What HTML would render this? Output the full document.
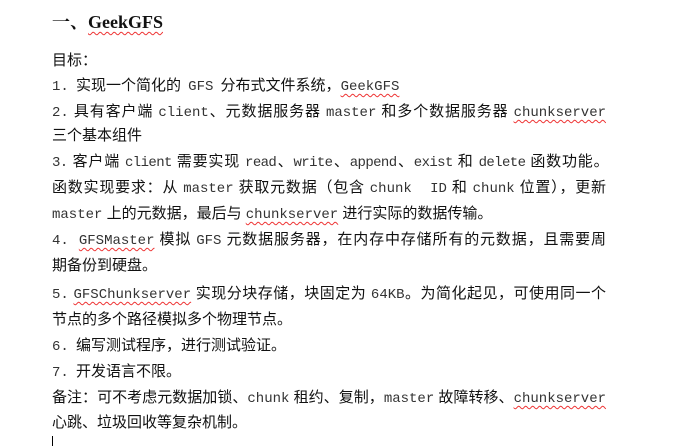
<!DOCTYPE html>
<html><head><meta charset="utf-8"><style>
body{margin:0;width:687px;height:447px;background:#fff;position:relative;overflow:hidden;font-family:"Liberation Sans","Noto Sans CJK SC",sans-serif;color:#111;}
.l{position:absolute;left:52px;width:554px;font-size:15px;line-height:20px;white-space:nowrap;}
.j{text-align:justify;text-align-last:justify;white-space:normal;}
.m{font-family:"Liberation Mono","Noto Sans CJK SC",monospace;color:#333;font-size:14px;}
.n{display:inline-block;width:24px;font-family:"Liberation Mono",monospace;color:#333;font-size:14px;}
.w{text-decoration:underline wavy #e33;text-decoration-thickness:1px;text-underline-offset:3px;}
.t{position:absolute;left:52px;top:9px;font-size:18px;font-weight:bold;line-height:26px;font-family:"Liberation Serif","Noto Serif CJK SC",serif;}
.cur{position:absolute;left:52px;top:436px;width:1px;height:10px;background:#000;}
</style></head><body>
<div class="t">一、<span class="w">GeekGFS</span></div>
<div class="l" style="top:51px">目标：</div>
<div class="l" style="top:76px;word-spacing:3px"><span class="n">1.</span>实现一个简化的 <span class="m">GFS</span> 分布式文件系统，<span class="m w">GeekGFS</span></div>
<div class="l j" style="top:102px"><span class="m">2.</span> 具有客户端 <span class="m">client</span>、元数据服务器 <span class="m">master</span> 和多个数据服务器 <span class="m w">chunkserver</span></div>
<div class="l" style="top:126px">三个基本组件</div>
<div class="l j" style="top:152px;letter-spacing:-0.6px;width:556px"><span class="m">3.</span> 客户端 <span class="m">client</span> 需要实现 <span class="m">read</span>、<span class="m">write</span>、<span class="m">append</span>、<span class="m">exist</span> 和 <span class="m">delete</span> 函数功能。</div>
<div class="l j" style="top:178px">函数实现要求：从 <span class="m">master</span> 获取元数据（包含 <span class="m">chunk&nbsp; ID</span> 和 <span class="m">chunk</span> 位置），更新</div>
<div class="l" style="top:204px"><span class="m">master</span> 上的元数据，最后与 <span class="m w">chunkserver</span> 进行实际的数据传输。</div>
<div class="l j" style="top:230px"><span class="m">4.</span> &nbsp;<span class="m w">GFSMaster</span> 模拟 <span class="m">GFS</span> 元数据服务器，在内存中存储所有的元数据，且需要周</div>
<div class="l" style="top:256px">期备份到硬盘。</div>
<div class="l j" style="top:284px"><span class="m">5.</span> <span class="m w">GFSChunkserver</span> 实现分块存储，块固定为 <span class="m">64KB</span>。为简化起见，可使用同一个</div>
<div class="l" style="top:310px">节点的多个路径模拟多个物理节点。</div>
<div class="l" style="top:336px"><span class="n">6.</span>编写测试程序，进行测试验证。</div>
<div class="l" style="top:362px"><span class="n">7.</span>开发语言不限。</div>
<div class="l j" style="top:388px">备注：可不考虑元数据加锁、<span class="m">chunk</span> 租约、复制，<span class="m">master</span> 故障转移、<span class="m w">chunkserver</span></div>
<div class="l" style="top:413px">心跳、垃圾回收等复杂机制。</div>
<div class="cur"></div>
</body></html>
